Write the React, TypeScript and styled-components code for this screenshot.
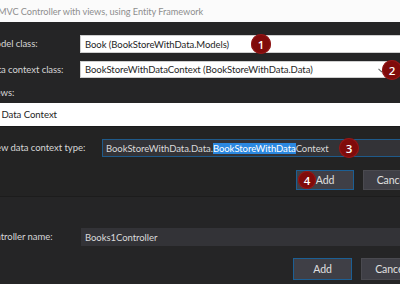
import React from "react";
import styled, { createGlobalStyle } from "styled-components";

const Global = createGlobalStyle`
  html, body { margin: 0; padding: 0; background: #252526; }
  * { box-sizing: border-box; }
`;

const Frame = styled.div`
  width: 400px;
  height: 284px;
  overflow: hidden;
  background: #252526;
  font-family: Lato, "Open Sans", sans-serif;
  font-size: 9.5px;
  letter-spacing: -0.05px;
  color: #d6d6d6;
`;

const TitleBar = styled.div`
  height: 22px;
  background: #fbfbfb;
  color: #8e8e8e;
  display: flex;
  align-items: center;
  margin-left: -2px;
  white-space: nowrap;
  font-size: 9.2px;
`;

const Row = styled.div<{ $labelW: number; $h: number; $mt: number; $shift: number }>`
  display: grid;
  grid-template-columns: ${(p) => p.$labelW}px 1fr;
  align-items: center;
  height: ${(p) => p.$h}px;
  margin-top: ${(p) => p.$mt}px;
  margin-left: ${(p) => -p.$shift}px;
  white-space: nowrap;
`;

const Label = styled.span`
  color: #d6d6d6;
  line-height: 1;
`;

const LightInput = styled.div<{ $endGap: number }>`
  position: relative;
  height: 100%;
  margin-right: ${(p) => p.$endGap}px;
  background: #ffffff;
  border: 1px solid #cfcfcf;
  color: #1e1e1e;
  display: flex;
  align-items: center;
  padding-left: 4px;
`;

const DarkInput = styled.div<{ $focused?: boolean }>`
  position: relative;
  height: 100%;
  margin-right: -10px;
  background: #333337;
  border: 1px solid ${(p) => (p.$focused ? "#1f5a8a" : "#333337")};
  color: #dadada;
  display: flex;
  align-items: center;
  padding-left: 3px;
`;

const Selected = styled.span`
  background: #2b88e0;
  color: #ffffff;
`;

const Chevron = styled.svg`
  position: absolute;
  right: 4px;
  top: 6px;
`;

const Badge = styled.div<{ $left: number; $top: number; $size?: number }>`
  position: absolute;
  left: ${(p) => p.$left}px;
  top: ${(p) => p.$top}px;
  width: ${(p) => p.$size ?? 20}px;
  height: ${(p) => p.$size ?? 20}px;
  border-radius: 50%;
  background: #800b0b;
  box-shadow: inset 0 0 0 1px #921a1a;
  color: #ffffff;
  font-family: "Open Sans", sans-serif;
  font-weight: 600;
  font-size: 11.5px;
  letter-spacing: 0;
  display: flex;
  align-items: center;
  justify-content: center;
  z-index: 2;
`;

const Inner = styled.section`
  margin-top: 3px;
  border-bottom: 1px solid #1c1c1c;
`;

const InnerTitle = styled.div`
  height: 24px;
  background: #ffffff;
  color: #1e1e1e;
  display: flex;
  align-items: center;
  margin-left: -18px;
  font-size: 9.6px;
  white-space: nowrap;
  border-bottom: 1px solid #1a1a1a;
`;

const InnerBody = styled.div`
  background: #232323;
  padding-top: 12px;
  padding-bottom: 6px;
`;

const ButtonRow = styled.div<{ $mt: number; $h: number; $gap: number; $overflow: number }>`
  display: flex;
  justify-content: flex-end;
  gap: ${(p) => p.$gap}px;
  margin-top: ${(p) => p.$mt}px;
  height: ${(p) => p.$h}px;
  width: calc(100% + ${(p) => p.$overflow}px);
`;

const Button = styled.div<{ $primary?: boolean; $w: number }>`
  position: relative;
  width: ${(p) => p.$w}px;
  height: 100%;
  background: #3f3f46;
  border: 1px solid ${(p) => (p.$primary ? "#1c5f94" : "#4a4a50")};
  color: #e0e0e0;
  font-size: 10.5px;
  display: flex;
  align-items: center;
  justify-content: center;
`;

export default function App() {
  return (
    <>
      <Global />
      <Frame>
        <TitleBar>MVC Controller with views, using Entity Framework</TitleBar>

        <Row $labelW={93} $h={18} $mt={13} $shift={13}>
          <Label>Model class:</Label>
          <LightInput $endGap={-10}>
            Book (BookStoreWithData.Models)
            <Badge $left={170} $top={-2}>1</Badge>
          </LightInput>
        </Row>
        <Row $labelW={94} $h={17} $mt={8} $shift={14}>
          <Label>Data context class:</Label>
          <LightInput $endGap={10}>
            BookStoreWithDataContext (BookStoreWithData.Data)
            <Chevron width="7" height="5" viewBox="0 0 7 5">
              <path d="M0.5 0.8 L3.5 3.8 L6.5 0.8" fill="none" stroke="#666" strokeWidth="1.1" />
            </Chevron>
            <Badge $left={301} $top={-2}>2</Badge>
          </LightInput>
        </Row>
        <Row $labelW={93} $h={14} $mt={8} $shift={13}>
          <Label>Views:</Label>
          <span />
        </Row>

        <Inner>
          <InnerTitle>Add Data Context</InnerTitle>
          <InnerBody>
            <Row $labelW={113} $h={18} $mt={0} $shift={11}>
              <Label>New data context type:</Label>
              <DarkInput $focused>
                <span>
                  BookStoreWithData.Data.<Selected>BookStoreWithData</Selected>Context
                </span>
                <Badge $left={236} $top={-2}>3</Badge>
              </DarkInput>
            </Row>
            <ButtonRow $mt={13} $h={20} $gap={9} $overflow={21}>
              <Button $primary $w={58}>
                <Badge $left={1} $top={0} $size={18}>4</Badge>
                Add
              </Button>
              <Button $w={58}>Cancel</Button>
            </ButtonRow>
          </InnerBody>
        </Inner>

        <Row $labelW={97} $h={18} $mt={31} $shift={16}>
          <Label>Controller name:</Label>
          <DarkInput>Books1Controller</DarkInput>
        </Row>
        <ButtonRow $mt={12} $h={22} $gap={9} $overflow={20}>
          <Button $primary $w={59}>Add</Button>
          <Button $w={59}>Cancel</Button>
        </ButtonRow>
      </Frame>
    </>
  );
}
